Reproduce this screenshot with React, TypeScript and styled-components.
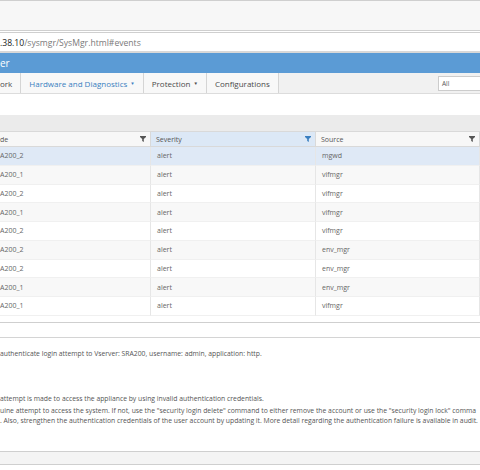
import React from "react";
import styled, { createGlobalStyle } from "styled-components";

const GlobalStyle = createGlobalStyle`
  html, body {
    margin: 0;
    padding: 0;
    background: #ffffff;
  }
  body {
    font-family: "Open Sans", "Noto Sans", sans-serif;
    width: 480px;
    overflow: hidden;
  }
`;

type Row = { node: string; severity: string; source: string };

const rows: Row[] = [
  { node: "A200_2", severity: "alert", source: "mgwd" },
  { node: "A200_1", severity: "alert", source: "vifmgr" },
  { node: "A200_2", severity: "alert", source: "vifmgr" },
  { node: "A200_1", severity: "alert", source: "vifmgr" },
  { node: "A200_2", severity: "alert", source: "vifmgr" },
  { node: "A200_2", severity: "alert", source: "env_mgr" },
  { node: "A200_2", severity: "alert", source: "env_mgr" },
  { node: "A200_1", severity: "alert", source: "env_mgr" },
  { node: "A200_1", severity: "alert", source: "vifmgr" },
];

const Page = styled.div`
  width: 480px;
  height: 470px;
  overflow: hidden;
  display: flex;
  flex-direction: column;
`;

const BrowserTop = styled.div`
  height: 29px;
  background: #f7f7f7;
  border-top: 1px solid #cfcfcf;
  flex-shrink: 0;
`;

const AddressBar = styled.div`
  height: 17px;
  background: #ffffff;
  border-top: 3px double #cfcfcf;
  border-bottom: 2px solid #d8d8d8;
  display: flex;
  align-items: center;
  padding-top: 1px;
  box-sizing: content-box;
  font-size: 8.6px;
  color: #7a7a7a;
  white-space: nowrap;
  flex-shrink: 0;
`;

const Host = styled.span`
  color: #222;
`;

const AppHeader = styled.div`
  height: 20px;
  background: #5b9bd5;
  color: #ffffff;
  font-size: 10px;
  display: flex;
  align-items: center;
  flex-shrink: 0;
`;

const Nav = styled.div`
  height: 20px;
  background: #f1f1f1;
  border-bottom: 1px solid #dcdcdc;
  display: flex;
  align-items: stretch;
  flex-shrink: 0;
`;

const NavItem = styled.div<{ $active?: boolean; $first?: boolean }>`
  display: flex;
  align-items: center;
  padding: 0 8px 0 ${(p) => (p.$first ? "0" : "8px")};
  background: #f8f8f8;
  border-right: 1px solid #d5d5d5;
  font-size: 8px;
  color: ${(p) => (p.$active ? "#3a7fc0" : "#4a4a4a")};
  white-space: nowrap;
`;

const Caret = styled.span`
  font-size: 4.5px;
  margin-left: 3px;
`;

const NavFill = styled.div`
  flex: 1;
`;

const SelectBox = styled.div`
  align-self: center;
  width: 42px;
  height: 15px;
  background: #ffffff;
  border: 1px solid #cccccc;
  border-right: none;
  font-size: 6.5px;
  color: #555;
  display: flex;
  align-items: center;
  padding-left: 3px;
  box-sizing: border-box;
`;

const Spacer = styled.div`
  height: 21px;
  flex-shrink: 0;
`;

const GreyBar = styled.div`
  height: 16px;
  background: #ebebeb;
  flex-shrink: 0;
`;

const Table = styled.div`
  display: grid;
  grid-template-columns: 151px 165px 164px;
  grid-auto-rows: 18.75px;
  grid-template-rows: 16px;
  flex-shrink: 0;
`;

const HeadCell = styled.div<{ $sorted?: boolean }>`
  border-top: 1px solid #d9d9d9;
  border-bottom: 1px solid #d9d9d9;
  border-right: 1px solid #d9d9d9;
  background: ${(p) => (p.$sorted ? "#dce8f6" : "#f7f7f7")};
  display: flex;
  align-items: center;
  justify-content: space-between;
  padding: 0 4px 0 5px;
  font-size: 7px;
  color: #555;
  box-sizing: border-box;
  &:first-child {
    padding-left: 0;
  }
`;

const Cell = styled.div<{ $bg: string }>`
  background: ${(p) => p.$bg};
  border-right: 1px solid #e6e6e6;
  border-bottom: 1px solid #f0f0f0;
  display: flex;
  align-items: center;
  padding-left: 6px;
  font-size: 7px;
  color: #666;
  box-sizing: border-box;
  white-space: nowrap;
  &:nth-child(3n + 1) {
    padding-left: 0;
  }
`;

const Divider = styled.div`
  height: 6px;
  border-bottom: 1px solid #cfcfcf;
  flex-shrink: 0;
`;

const DetailsWrap = styled.div`
  height: 14px;
  border-bottom: 1px solid #d4d4d4;
  flex-shrink: 0;
`;

const Details = styled.div`
  height: 114px;
  background: #ffffff;
  border-bottom: 1px solid #cfcfcf;
  display: flex;
  flex-direction: column;
  padding-top: 11px;
  box-sizing: border-box;
  flex-shrink: 0;
  overflow: hidden;
`;

const DetailLine = styled.div<{ $gap?: number }>`
  font-size: 6.8px;
  line-height: 10px;
  color: #555;
  white-space: nowrap;
  margin-top: ${(p) => p.$gap ?? 0}px;
`;

const Footer = styled.div`
  height: 12px;
  background: #f4f4f4;
  border-bottom: 1px solid #cfcfcf;
  flex-shrink: 0;
`;

const Funnel = ({ color = "#555" }: { color?: string }) => (
  <svg width="6" height="6" viewBox="0 0 6 6">
    <path d="M0 0 H6 V1 L3.8 3 V6 L2.2 5 V3 L0 1 Z" fill={color} />
  </svg>
);

const rowBg = (i: number) =>
  i === 0 ? "#dfe9f6" : i % 2 === 1 ? "#f8f8f8" : "#ffffff";

export default function App() {
  return (
    <Page>
      <GlobalStyle />
      <BrowserTop />
      <AddressBar>
        <Host>.38.10</Host>/sysmgr/SysMgr.html#events
      </AddressBar>
      <AppHeader>er</AppHeader>
      <Nav>
        <NavItem $first>ork</NavItem>
        <NavItem $active>
          Hardware and Diagnostics<Caret>▼</Caret>
        </NavItem>
        <NavItem>
          Protection<Caret>▼</Caret>
        </NavItem>
        <NavItem>Configurations</NavItem>
        <NavFill />
        <SelectBox>All</SelectBox>
      </Nav>
      <Spacer />
      <GreyBar />
      <Table>
        <HeadCell>
          de
          <Funnel />
        </HeadCell>
        <HeadCell $sorted>
          Severity
          <Funnel color="#3a7fc0" />
        </HeadCell>
        <HeadCell>
          Source
          <Funnel />
        </HeadCell>
        {rows.map((r, i) => (
          <React.Fragment key={i}>
            <Cell $bg={rowBg(i)}>{r.node}</Cell>
            <Cell $bg={rowBg(i)}>{r.severity}</Cell>
            <Cell $bg={rowBg(i)}>{r.source}</Cell>
          </React.Fragment>
        ))}
      </Table>
      <Divider />
      <DetailsWrap />
      <Details>
        <DetailLine>
          authenticate login attempt to Vserver: SRA200, username: admin, application: http.
        </DetailLine>
        <DetailLine $gap={35}>
          attempt is made to access the appliance by using invalid authentication credentials.
        </DetailLine>
        <DetailLine $gap={2}>
          uine attempt to access the system. If not, use the "security login delete" command to either remove the account or use the "security login lock" comma
        </DetailLine>
        <DetailLine>
          . Also, strengthen the authentication credentials of the user account by updating it. More detail regarding the authentication failure is available in audit.
        </DetailLine>
      </Details>
      <Footer />
    </Page>
  );
}
